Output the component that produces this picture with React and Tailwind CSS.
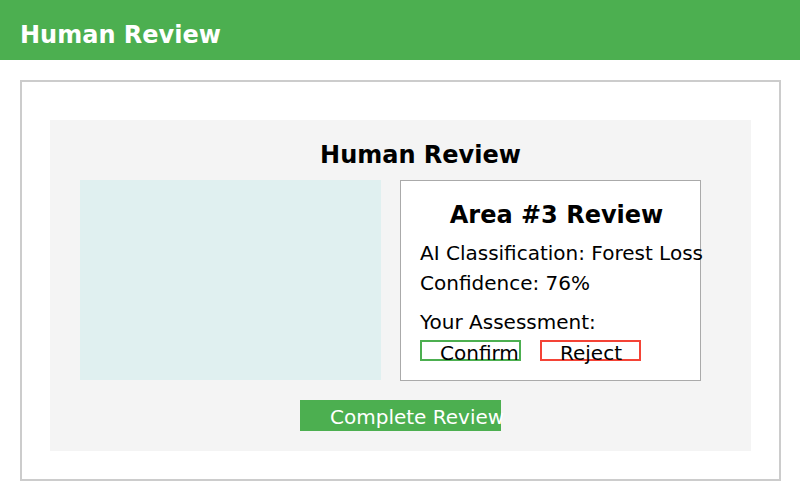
export default function App() {
  return (
    <div
      className="w-[800px] h-[500px] bg-white overflow-hidden"
      style={{ fontFamily: '"DejaVu Sans", sans-serif' }}
    >
      <div className="h-[60px] bg-[#4caf50] pl-[20px] pt-[23px]">
        <div className="text-[24px] leading-[24px] font-bold text-white">Human Review</div>
      </div>
      <div className="mt-[20px] ml-[20px] w-[761px] h-[401px] border-2 border-[#cccccc] bg-white pt-[38px] pl-[28px]">
        <div className="w-[701px] h-[331px] bg-[#f4f4f4]">
          <div className="pt-[23px] pl-[40px] text-center text-[24px] leading-[24px] font-bold text-black">
            Human Review
          </div>
          <div className="mt-[13px] pl-[30px] flex gap-[19px]">
            <div className="w-[301px] h-[200px] bg-[#e0f0f0]" />
            <div className="w-[301px] h-[201px] border border-[#aaaaaa] bg-white text-black">
              <div className="pt-[22px] pl-[12px] text-center text-[24px] leading-[24px] font-bold whitespace-nowrap">
                Area #3 Review
              </div>
              <div className="pl-[19px] text-[20px] leading-[18px] whitespace-nowrap">
                <div className="mt-[17px]">AI Classification: Forest Loss</div>
                <div className="mt-[12px]">Confidence: 76%</div>
                <div className="mt-[21px]">Your Assessment:</div>
                <div className="mt-[9px] flex gap-[19px]">
                  <div className="w-[101px] h-[21px] border-2 border-[#4caf50] pl-[18px] pt-[2px]">Confirm</div>
                  <div className="w-[101px] h-[21px] border-2 border-[#f44336] pl-[18px] pt-[2px]">Reject</div>
                </div>
              </div>
            </div>
          </div>
          <div className="mt-[19px] pl-[250px]">
            <div className="w-[201px] h-[31px] bg-[#4caf50] pl-[30px] pt-[7px] text-[20px] leading-[20px] text-white whitespace-nowrap">
              Complete Review
            </div>
          </div>
        </div>
      </div>
    </div>
  );
}
